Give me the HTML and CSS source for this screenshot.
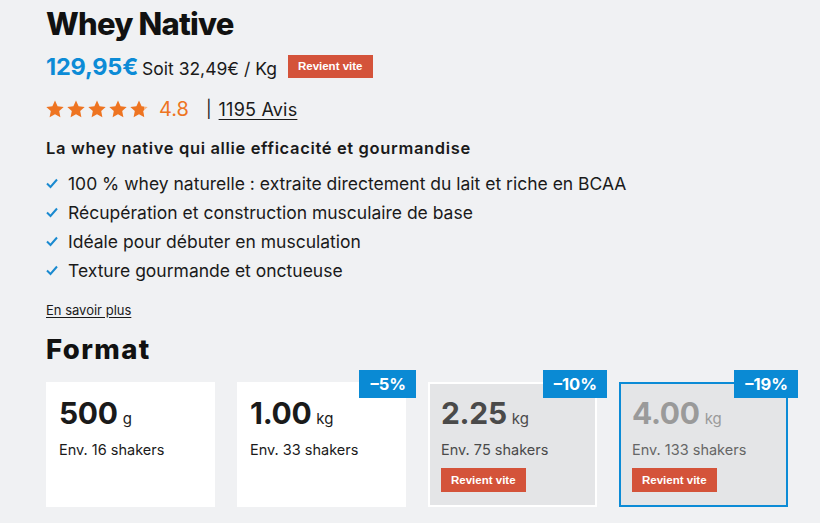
FILE: index.html
```html
<!DOCTYPE html>
<html lang="fr">
<head>
<meta charset="utf-8">
<link rel="stylesheet" href="styles.css">
</head>
<body>
<div class="product">
  <h1 class="title">Whey Native</h1>
  <div class="price-row">
    <span class="price">129,95€</span>
    <span class="unit">Soit 32,49€ / Kg</span>
    <span class="tag">Revient vite</span>
  </div>
  <div class="rating">
    <span class="stars">
      <svg width="105" height="19" viewBox="0 0 105 19">
        <defs>
          <linearGradient id="part" x1="0" x2="1" y1="0" y2="0">
            <stop offset="0.8" stop-color="#ee7421"/>
            <stop offset="0.8" stop-color="#f5b584"/>
          </linearGradient>
          <path id="st" d="M9 0.6l2.6 5.6 6.1 0.7-4.5 4.2 1.2 6.1L9 14.2 3.6 17.2l1.2-6.1L0.3 6.9l6.1-0.7z"/>
        </defs>
        <use href="#st" x="0" fill="#ee7421"/>
        <use href="#st" x="21" fill="#ee7421"/>
        <use href="#st" x="42" fill="#ee7421"/>
        <use href="#st" x="63" fill="#ee7421"/>
        <use href="#st" x="84" fill="url(#part)"/>
      </svg>
    </span>
    <span class="score">4.8</span>
    <span class="sep">|</span>
    <a class="reviews" href="#">1195 Avis</a>
  </div>
  <p class="lead">La whey native qui allie efficacité et gourmandise</p>
  <ul class="benefits">
    <li><svg class="check" width="12" height="11" viewBox="0 0 12 11"><path d="M1 5.5l3.5 3.5L11 1.5" fill="none" stroke="#1a8ad0" stroke-width="2"/></svg>100 % whey naturelle : extraite directement du lait et riche en BCAA</li>
    <li><svg class="check" width="12" height="11" viewBox="0 0 12 11"><path d="M1 5.5l3.5 3.5L11 1.5" fill="none" stroke="#1a8ad0" stroke-width="2"/></svg>Récupération et construction musculaire de base</li>
    <li><svg class="check" width="12" height="11" viewBox="0 0 12 11"><path d="M1 5.5l3.5 3.5L11 1.5" fill="none" stroke="#1a8ad0" stroke-width="2"/></svg>Idéale pour débuter en musculation</li>
    <li><svg class="check" width="12" height="11" viewBox="0 0 12 11"><path d="M1 5.5l3.5 3.5L11 1.5" fill="none" stroke="#1a8ad0" stroke-width="2"/></svg>Texture gourmande et onctueuse</li>
  </ul>
  <a class="more" href="#">En savoir plus</a>
  <h2 class="format-title">Format</h2>
  <div class="formats">
    <div class="card">
      <div class="qty"><span class="num">500</span> <span class="u">g</span></div>
      <div class="shakers">Env. 16 shakers</div>
    </div>
    <div class="card">
      <span class="disc">–5%</span>
      <div class="qty"><span class="num">1.00</span> <span class="u">kg</span></div>
      <div class="shakers">Env. 33 shakers</div>
    </div>
    <div class="card out">
      <span class="disc">–10%</span>
      <div class="qty"><span class="num">2.25</span> <span class="u">kg</span></div>
      <div class="shakers">Env. 75 shakers</div>
      <span class="tag small">Revient vite</span>
    </div>
    <div class="card out selected">
      <span class="disc">–19%</span>
      <div class="qty"><span class="num">4.00</span> <span class="u">kg</span></div>
      <div class="shakers">Env. 133 shakers</div>
      <span class="tag small">Revient vite</span>
    </div>
  </div>
</div>
</body>
</html>
```

FILE: styles.css
```css
html, body {
  margin: 0;
  padding: 0;
  background: #f0f1f3;
}
body {
  font-family: Inter, "Noto Sans", sans-serif;
  color: #1a1a1a;
  width: 820px;
  height: 523px;
  overflow: hidden;
}
.product {
  padding: 4px 0 0 46px;
}
.title {
  margin: 0;
  font-size: 31px;
  line-height: 40px;
  font-weight: 800;
  letter-spacing: -0.8px;
  color: #111;
}
.price-row {
  display: flex;
  align-items: center;
  margin-top: 9px;
  height: 27px;
}
.price {
  font-size: 23.5px;
  font-weight: 700;
  color: #0c8bd6;
  letter-spacing: -0.2px;
}
.unit {
  font-size: 17.5px;
  margin-left: 4px;
  margin-top: 3px;
  letter-spacing: 0;
}
.tag {
  display: inline-block;
  background: #d4533a;
  color: #fff;
  font-family: "Liberation Sans", Arial, sans-serif;
  font-weight: 700;
  font-size: 11.5px;
  line-height: 23px;
  padding: 0 10px;
  margin-left: 11px;
}
.rating {
  display: flex;
  align-items: center;
  margin-top: 17px;
  height: 24px;
}
.stars svg {
  display: block;
}
.score {
  font-size: 20px;
  color: #ee7421;
  margin-left: 8px;
}
.sep {
  font-size: 17px;
  margin-left: 17px;
}
.reviews {
  font-size: 18px;
  color: #1a1a1a;
  margin-left: 7px;
  letter-spacing: 0.2px;
  text-underline-offset: 3px;
}
.lead {
  margin: 17px 0 0;
  font-size: 16.5px;
  font-weight: 600;
  line-height: 20px;
  letter-spacing: 0.65px;
}
.benefits {
  list-style: none;
  margin: 11px 0 0;
  padding: 0;
}
.benefits li {
  display: flex;
  align-items: center;
  font-size: 17.5px;
  line-height: 29px;
  letter-spacing: 0;
}
.check {
  margin-right: 10px;
  flex: none;
}
.more {
  display: inline-block;
  margin-top: 17px;
  font-size: 13px;
  color: #1a1a1a;
  text-underline-offset: 2px;
}
.format-title {
  margin: 13px 0 0;
  font-size: 27.5px;
  line-height: 34px;
  font-weight: 800;
  letter-spacing: 1.4px;
  color: #111;
}
.formats {
  display: flex;
  gap: 22px;
  margin-top: 16px;
}
.card {
  position: relative;
  box-sizing: border-box;
  width: 169px;
  height: 125px;
  background: #fff;
  border: 2px solid #fff;
  padding: 11px 11px;
}
.card.out {
  background: #e4e5e7;
}
.card.selected {
  border-color: #0c8bd6;
}
.disc {
  position: absolute;
  top: -14px;
  right: -12px;
  background: #0a8ad4;
  color: #fff;
  font-weight: 700;
  font-size: 16.5px;
  line-height: 28px;
  padding: 0 10px 0 11px;
}
.qty {
  display: flex;
  align-items: baseline;
  gap: 5px;
  height: 36px;
  margin-top: 0;
}
.num {
  font-size: 30px;
  font-weight: 700;
  letter-spacing: -0.3px;
}
.u {
  font-size: 15px;
}
.shakers {
  font-size: 14.5px;
  margin-top: 10px;
}
.card.out .qty,
.card.out .shakers {
  color: #4a4a4a;
}
.card.selected .qty {
  color: #9a9a9a;
}
.card.selected .shakers {
  color: #666;
}
.tag.small {
  margin: 10px 0 0 0;
  line-height: 24px;
}
```
